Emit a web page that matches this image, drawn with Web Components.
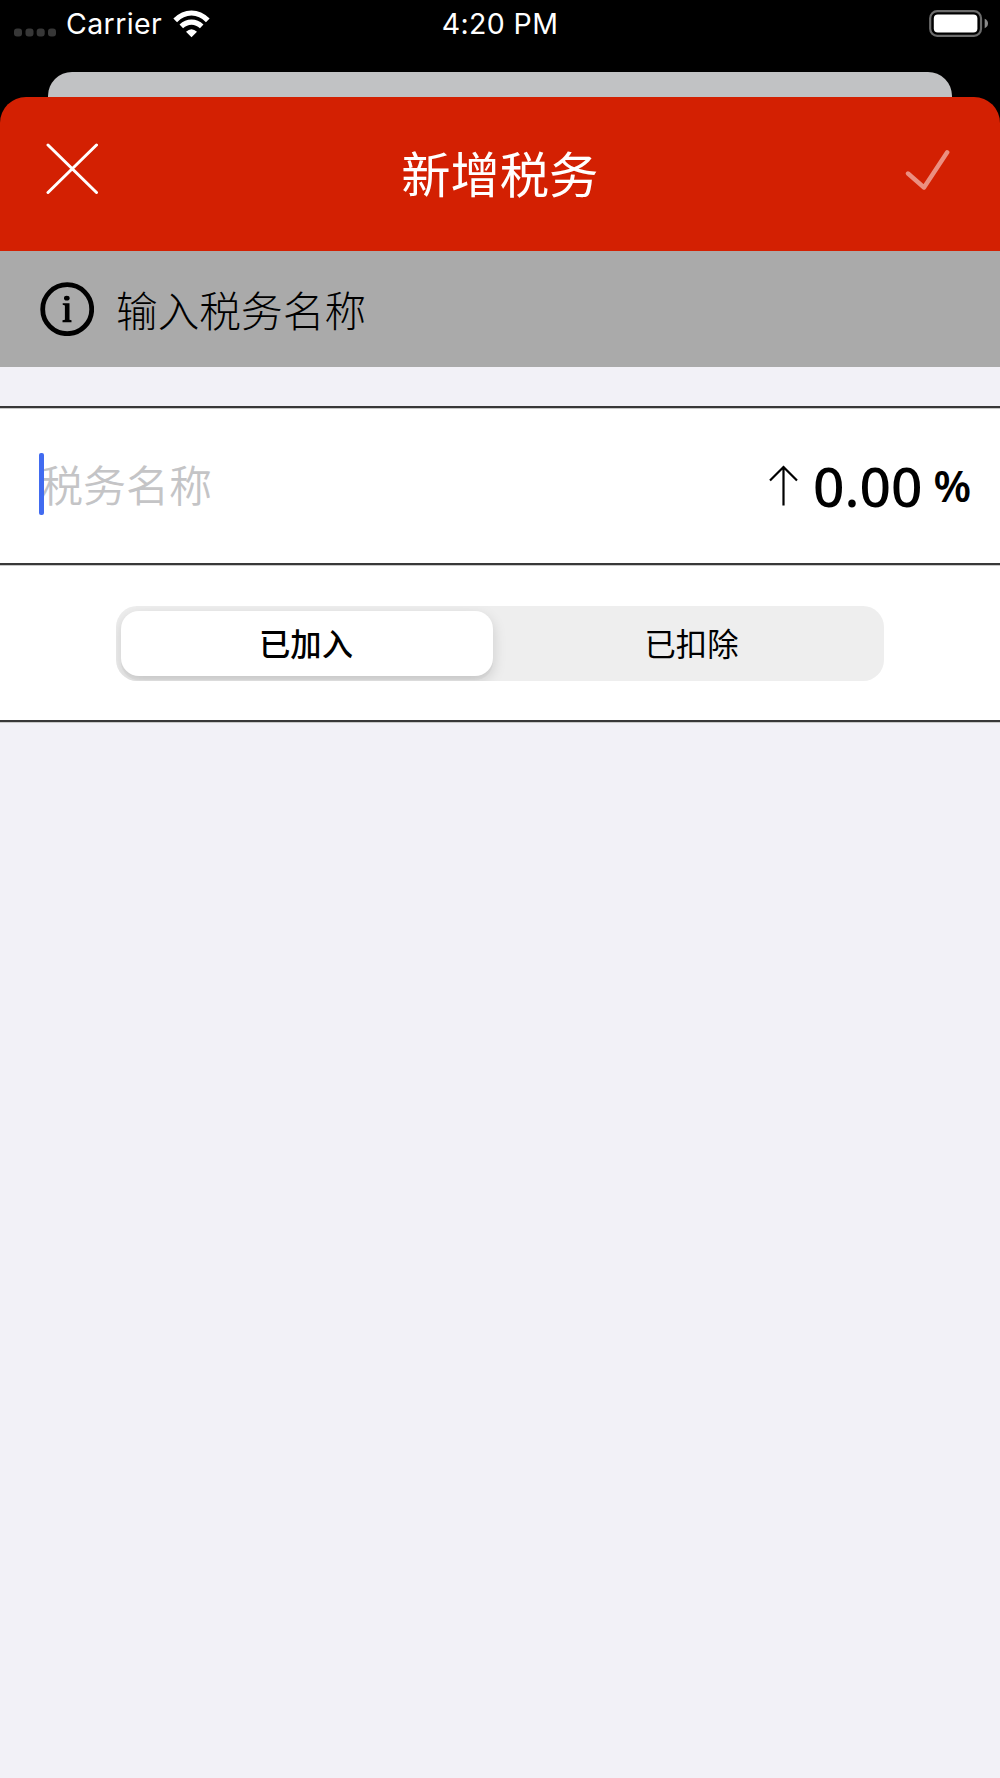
<!DOCTYPE html>
<html lang="zh-Hans">
<head>
<meta charset="utf-8">
<title>新增税务</title>
<style>
  body {
    margin: 0;
    background: #f2f1f7;
    font-family: "Noto Sans CJK SC", sans-serif;
    color: #000;
  }
</style>
</head>
<body>
<tax-page></tax-page>

<script>
class StatusBar extends HTMLElement {
  constructor() {
    super();
    this.attachShadow({ mode: 'open' }).innerHTML = `
    <style>
        :host {
          display: grid;
          grid-template-columns: 1fr auto 1fr;
          height: 48px;
          color: #fff;
          font: 400 28.5px/48px Inter, sans-serif;
          letter-spacing: 0.4px;
        }

        .left {
          display: flex;
          padding-left: 14px;
        }

        .dots {
          margin: 28px 10px 0 0;
        }

        .carrier {
          width: 96px;
        }

        .wifi {
          margin: 9.5px 0 0 10.5px;
        }

        .battery {
          justify-self: end;
          margin: 9px 12px 0 0;
        }

        svg {
          display: block;
          flex: none;
        }
    </style>

    <div class="left">
      <svg class="dots" width="42" height="9" fill="#373737">
        <rect x="0" y="0.5" width="8" height="8" rx="3"/>
        <rect x="11.5" y="0.5" width="8" height="8" rx="3"/>
        <rect x="22.7" y="0.5" width="8" height="8" rx="3"/>
        <rect x="34" y="0.5" width="8" height="8" rx="3"/>
      </svg>
      <span class="carrier">Carrier</span>
      <svg class="wifi" width="37" height="28" viewBox="0 0 37 28" fill="none" stroke="#fff">
        <path d="M2.2 10.3Q9.5 3 18.5 3T34.8 10.3" stroke-width="5.2"/>
        <path d="M8.3 16.3Q12.8 12.1 18.5 12.1T28.7 16.3" stroke-width="5.2"/>
        <path d="M18.5 27.3 13 21.8Q18.5 16.6 24 21.8Z" fill="#fff" stroke="none"/>
      </svg>
    </div>
    <span>4:20 PM</span>
    <svg class="battery" width="59" height="29" viewBox="0 0 59 29">
      <rect x="1.2" y="2.2" width="50.8" height="24.6" rx="7" fill="none" stroke="#6c6c6c" stroke-width="2.2"/>
      <rect x="4.8" y="5.6" width="43.6" height="18" rx="4" fill="#fff"/>
      <path d="M55.7 9.8Q59 11.3 59 14.5T55.7 19.2Z" fill="#8a8a8a"/>
    </svg>`;
  }
}

class SheetHeader extends HTMLElement {
  constructor() {
    super();
    this.attachShadow({ mode: 'open' }).innerHTML = `
    <style>
        :host {
          display: flex;
          justify-content: space-between;
          height: 154px;
          box-sizing: border-box;
          padding: 0 50.5px 0 46px;
          border-radius: 26px 26px 0 0;
          background: #d32002;
          color: #fff;
        }

        h1 {
          margin: 0 3px 0 0;
          font-size: 49.3px;
          line-height: 150px;
          font-weight: 400;
        }

        .close {
          margin-top: 45px;
        }

        .done {
          margin-top: 52px;
        }

        svg {
          fill: none;
          stroke: #fff;
          stroke-linecap: round;
          stroke-linejoin: round;
        }
    </style>

    <svg class="close" width="52" height="52">
      <path d="M2 3 50.5 50.5M50.5 3 2 50.5" stroke-width="3"/>
    </svg>
    <h1><slot></slot></h1>
    <svg class="done" width="45" height="43">
      <path d="M3 24.5 19 38.5 42.2 3.3" stroke-width="4.4" style="stroke: #eb8f80"/>
    </svg>`;
  }
}

class InfoBanner extends HTMLElement {
  constructor() {
    super();
    this.attachShadow({ mode: 'open' }).innerHTML = `
    <style>
        :host {
          display: flex;
          align-items: center;
          gap: 22px;
          height: 116px;
          padding-left: 40px;
          background: #aaa;
          font-size: 41.7px;
          font-weight: 300;
        }

        svg {
          flex: none;
        }

        span {
          margin-top: -1px;
        }
    </style>

    <svg width="54" height="54">
      <circle cx="27.2" cy="27.2" r="24.5" fill="none" stroke="#000" stroke-width="4.8"/>
      <ellipse cx="26.8" cy="16.2" rx="2.8" ry="2.4"/>
      <path d="M22.7 21.2H29.5V37.8L31.5 38.3V40.2H22.5V38.3L24.9 37.8V23.4L22.7 22.8Z"/>
    </svg>
    <span><slot></slot></span>`;
  }
}

class TaxRow extends HTMLElement {
  constructor() {
    super();
    this.attachShadow({ mode: 'open' }).innerHTML = `
    <style>
        :host {
          display: flex;
          align-items: center;
          height: 155px;
          border-bottom: 2px solid #383838;
          background: #fff;
          box-shadow: inset 0 1px #c8c8c8;
        }
    </style>

    <slot></slot>`;
  }
}

class NameField extends HTMLElement {
  constructor() {
    super();
    this.attachShadow({ mode: 'open' }).innerHTML = `
    <style>
        :host {
          display: flex;
          align-items: center;
          flex: 1;
          margin-top: -3px;
          padding-left: 39px;
          font-size: 43px;
          font-weight: 350;
          color: #c4c4c6;
        }

        .caret {
          width: 4.6px;
          height: 62px;
          margin-right: -3.5px;
          border-radius: 2px;
          background: #416bf0;
          z-index: 1;
        }

        span {
          margin-top: -2px;
        }
    </style>

    <i class="caret"></i>
    <span><slot></slot></span>`;
  }
}

class RateValue extends HTMLElement {
  constructor() {
    super();
    this.attachShadow({ mode: 'open' }).innerHTML = `
    <style>
        :host {
          display: flex;
          align-items: flex-start;
          height: 155px;
          padding-right: 29px;
        }

        svg {
          margin-top: 57px;
        }

        .value {
          margin-left: 15px;
          font: 500 55px/156px "Noto Sans", sans-serif;
        }

        .unit {
          margin-left: 11px;
          font: 600 43px/155px "Noto Sans", sans-serif;
        }
    </style>

    <svg width="29" height="41" fill="none" stroke="#000" stroke-width="2.2">
      <path d="M14.5 40.5V2M1 15.5 14.5 2 28 15.5"/>
    </svg>
    <span class="value"><slot></slot></span>
    <span class="unit">%</span>`;
  }
}

class SegmentedControl extends HTMLElement {
  constructor() {
    super();
    this.attachShadow({ mode: 'open' }).innerHTML = `
    <style>
        :host {
          display: grid;
          grid-template-columns: 372px 1fr;
          width: 768px;
          height: 75px;
          box-sizing: border-box;
          margin: 2px auto 0;
          padding: 5px 0 5px 5px;
          border-radius: 21px;
          overflow: hidden;
          background: #eee;
          font-size: 31.3px;
          line-height: 63px;
          text-align: center;
        }

        .selected {
          padding-right: 2px;
          border-radius: 18px;
          background: #fff;
          box-shadow: 0 5px 14px rgba(0, 0, 0, 0.15), 0 4px 1px rgba(0, 0, 0, 0.03);
          font-weight: 500;
        }

        .other {
          padding-left: 6px;
        }
    </style>

    <div class="selected"><slot name="selected"></slot></div>
    <div class="other"><slot></slot></div>`;
  }
}

class TaxPage extends HTMLElement {
  constructor() {
    super();
    this.attachShadow({ mode: 'open' }).innerHTML = `
    <style>
        :host {
          display: block;
          height: 1778px;
          overflow: hidden;
        }

        .backdrop {
          height: 123px;
          margin-bottom: -26px;
          background: #000;
        }

        /* top edge of the screen below the sheet */
        .previous {
          height: 51px;
          margin: 24px 48px 0;
          border-radius: 24px 24px 0 0;
          background: #c1c2c4;
        }

        .form {
          margin-top: 39px;
          border-top: 2px solid #383838;
          box-shadow: 0 1px #c8c8c8;
        }
    </style>

    <div class="backdrop">
      <status-bar></status-bar>
      <div class="previous"></div>
    </div>
    <sheet-header>新增税务</sheet-header>
    <info-banner>输入税务名称</info-banner>
    <div class="form">
      <tax-row>
        <name-field>税务名称</name-field>
        <rate-value>0.00</rate-value>
      </tax-row>
      <tax-row>
        <segmented-control>
          <span slot="selected">已加入</span>
          已扣除
        </segmented-control>
      </tax-row>
    </div>`;
  }
}

customElements.define('status-bar', StatusBar);
customElements.define('sheet-header', SheetHeader);
customElements.define('info-banner', InfoBanner);
customElements.define('tax-row', TaxRow);
customElements.define('name-field', NameField);
customElements.define('rate-value', RateValue);
customElements.define('segmented-control', SegmentedControl);
customElements.define('tax-page', TaxPage);
</script>
</body>
</html>
